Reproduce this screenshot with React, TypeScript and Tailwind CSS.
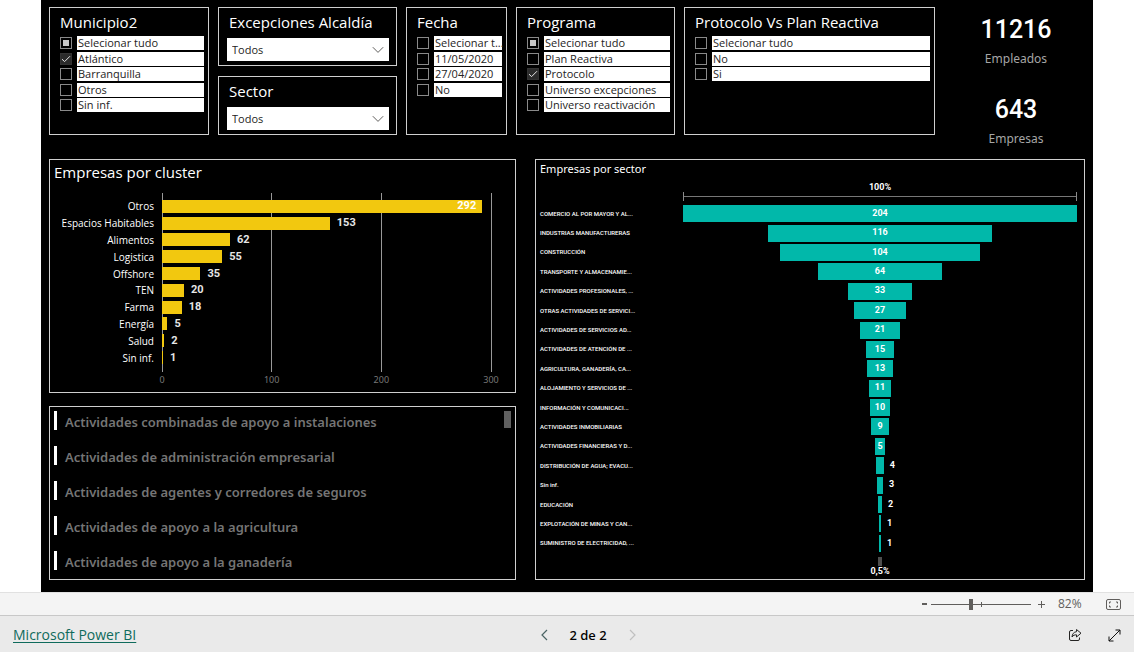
import { useEffect, useRef, type ReactNode } from "react";

type Option = { label: string; state?: "checked" | "partial" };

const municipios: Option[] = [
  { label: "Selecionar tudo", state: "partial" },
  { label: "Atlántico", state: "checked" },
  { label: "Barranquilla" },
  { label: "Otros" },
  { label: "Sin inf." },
];
const fechas: Option[] = [
  { label: "Selecionar t..." },
  { label: "11/05/2020" },
  { label: "27/04/2020" },
  { label: "No" },
];
const programas: Option[] = [
  { label: "Selecionar tudo", state: "partial" },
  { label: "Plan Reactiva" },
  { label: "Protocolo", state: "checked" },
  { label: "Universo excepciones" },
  { label: "Universo reactivación" },
];
const protocolos: Option[] = [{ label: "Selecionar tudo" }, { label: "No" }, { label: "Si" }];

const clusters: [string, number][] = [
  ["Otros", 292],
  ["Espacios Habitables", 153],
  ["Alimentos", 62],
  ["Logistica", 55],
  ["Offshore", 35],
  ["TEN", 20],
  ["Farma", 18],
  ["Energía", 5],
  ["Salud", 2],
  ["Sin inf.", 1],
];

const sectores: [string, number][] = [
  ["COMERCIO AL POR MAYOR Y AL...", 204],
  ["INDUSTRIAS MANUFACTURERAS", 116],
  ["CONSTRUCCIÓN", 104],
  ["TRANSPORTE Y ALMACENAMIE...", 64],
  ["ACTIVIDADES PROFESIONALES, ...", 33],
  ["OTRAS ACTIVIDADES DE SERVICI...", 27],
  ["ACTIVIDADES DE SERVICIOS AD...", 21],
  ["ACTIVIDADES DE ATENCIÓN DE ...", 15],
  ["AGRICULTURA, GANADERÍA, CA...", 13],
  ["ALOJAMIENTO Y SERVICIOS DE ...", 11],
  ["INFORMACIÓN Y COMUNICACI...", 10],
  ["ACTIVIDADES INMOBILIARIAS", 9],
  ["ACTIVIDADES FINANCIERAS Y D...", 5],
  ["DISTRIBUCIÓN DE AGUA; EVACU...", 4],
  ["Sin inf.", 3],
  ["EDUCACIÓN", 2],
  ["EXPLOTACIÓN DE MINAS Y CAN...", 1],
  ["SUMINISTRO DE ELECTRICIDAD, ...", 1],
];

const actividades = [
  "Actividades combinadas de apoyo a instalaciones",
  "Actividades de administración empresarial",
  "Actividades de agentes y corredores de seguros",
  "Actividades de apoyo a la agricultura",
  "Actividades de apoyo a la ganadería",
];

function Panel({ className = "", children }: { className?: string; children: ReactNode }) {
  return <section className={`min-w-0 border border-[#cfcfcf] ${className}`}>{children}</section>;
}

function CheckItem({ option }: { option: Option }) {
  const ref = useRef<HTMLInputElement>(null);
  useEffect(() => {
    if (ref.current) ref.current.indeterminate = option.state === "partial";
  }, [option.state]);
  return (
    <label className="flex min-w-0 items-start gap-[5px]">
      <span className="mt-px grid size-3 shrink-0 place-items-center">
        <input
          ref={ref}
          type="checkbox"
          defaultChecked={option.state === "checked"}
          className="peer col-start-1 row-start-1 size-3 appearance-none border border-[#8a8a8a] bg-black checked:border-[#333333] checked:bg-[#2b2b2b]"
        />
        <span className="pointer-events-none col-start-1 row-start-1 hidden size-[6px] bg-[#c8c8c8] peer-indeterminate:block" />
        <svg
          viewBox="0 0 12 12"
          className="pointer-events-none col-start-1 row-start-1 hidden size-3 peer-checked:block"
          fill="none"
          stroke="#e6e6e6"
          strokeWidth="1"
        >
          <path d="M2 6.2 4.6 8.6 10 3.2" />
        </svg>
      </span>
      <span className="h-[14px] min-w-0 flex-1 bg-white pl-px font-['Open_Sans',sans-serif] text-[11px] leading-[14px] whitespace-nowrap text-[#252423]">
        {option.label}
      </span>
    </label>
  );
}

function CheckSlicer({ title, options }: { title: string; options: Option[] }) {
  return (
    <Panel className="h-32 pt-[5px] pr-[4px] pl-[10px]">
      <fieldset className="min-w-0">
        <legend className="mb-[3px] h-5 font-['Open_Sans',sans-serif] text-[15px] leading-[18px] whitespace-nowrap text-white">
          {title}
        </legend>
        <div className="grid h-[78px] grid-rows-5">
          {options.map((o) => (
            <CheckItem key={o.label} option={o} />
          ))}
        </div>
      </fieldset>
    </Panel>
  );
}

function SelectSlicer({ id, title }: { id: string; title: string }) {
  return (
    <Panel className="h-[59px] pt-[5px] pr-[7px] pl-[8px]">
      <label
        htmlFor={id}
        className="block h-5 pl-[2px] font-['Open_Sans',sans-serif] text-[15px] leading-[18px] whitespace-nowrap text-white"
      >
        {title}
      </label>
      <div className="relative mt-[5px]">
        <select
          id={id}
          className="block h-[23px] w-full appearance-none bg-white pl-[5px] font-['Open_Sans',sans-serif] text-[11px] leading-[23px] text-[#252423]"
        >
          <option>Todos</option>
        </select>
        <svg
          viewBox="0 0 12 8"
          className="pointer-events-none absolute top-2 right-[5px] h-2 w-3"
          fill="none"
          stroke="#605e5c"
          strokeWidth="1"
        >
          <path d="M.8 1.2 6 6.4 11.2 1.2" />
        </svg>
      </div>
    </Panel>
  );
}

function Kpi({ value, label }: { value: string; label: string }) {
  return (
    <div className="flex flex-col items-center">
      <span className="font-[Roboto,sans-serif] text-[25px] leading-8 font-medium text-white">{value}</span>
      <span className="mt-[3px] text-[12px] leading-5 text-[#a6a6a6]">{label}</span>
    </div>
  );
}

function ClusterChart() {
  return (
    <Panel className="h-[234px] pt-[2px] pr-[24px] pl-[4px]">
      <h2 className="h-[22px] font-['Open_Sans',sans-serif] text-[15px] leading-5 text-white">
        Empresas por cluster
      </h2>
      <div className="relative mt-[9px] ml-[108px] h-[179px]">
        {[0, 100, 200, 300].map((t) => (
          <div
            key={t}
            className="absolute top-0 flex w-8 -translate-x-1/2 flex-col items-center"
            style={{ left: `${t / 3}%` }}
          >
            <span className="h-[179px] w-px bg-[#999999]" />
            <span className="mt-[2px] text-[9px] leading-3 text-[#777777]">{t}</span>
          </div>
        ))}
        <div className="relative grid h-[173px] grid-rows-10 pt-[5px]">
          {clusters.map(([name, value]) => (
            <div key={name} className="-ml-[108px] flex items-center">
              <span className="w-[100px] shrink-0 text-right font-['Open_Sans',sans-serif] text-[10px] leading-4 whitespace-nowrap text-white">
                {name}
              </span>
              <div className="ml-2 flex min-w-0 flex-1 items-center">
                <div
                  className="flex h-[13px] items-center justify-end bg-[#f2c80f]"
                  style={{ width: `${value / 3}%` }}
                >
                  {value > 200 && (
                    <span className="pr-[6px] font-[Roboto,sans-serif] text-[11px] font-bold text-white">{value}</span>
                  )}
                </div>
                {value <= 200 && (
                  <span className="pl-[7px] font-[Roboto,sans-serif] text-[11px] leading-4 font-bold text-[#e6e6e6]">
                    {value}
                  </span>
                )}
              </div>
            </div>
          ))}
        </div>
      </div>
    </Panel>
  );
}

function ActivityList() {
  return (
    <Panel className="flex h-[174px] justify-between pt-[4px] pr-[4px] pl-[4px]">
      <ul className="flex flex-col gap-4">
        {actividades.map((a) => (
          <li key={a}>
            <button
              type="button"
              className="flex h-[19px] items-center border-l-[3px] border-white pt-[3px] pl-2 text-[13px] leading-4 font-semibold whitespace-nowrap text-[#757575]"
            >
              {a}
            </button>
          </li>
        ))}
      </ul>
      <span className="h-[17px] w-[7px] bg-[#606060]" />
    </Panel>
  );
}

function FunnelChart() {
  return (
    <Panel className="h-[421px] pr-[7px] pl-[4px]">
      <h2 className="h-[18px] text-[11px] leading-[18px] text-white">Empresas por sector</h2>
      <div className="font-[Roboto,sans-serif] font-bold">
        <div className="ml-[143px] pt-1">
          <p className="h-[10px] text-center text-[9px] leading-[10px] text-white">100%</p>
          <div className="flex h-[9px] items-center border-x border-[#8a8a8a]">
            <span className="h-px flex-1 bg-[#777777]" />
          </div>
        </div>
        <ul className="mt-[3px] grid h-[349px] [grid-template-rows:repeat(18,1fr)]">
          {sectores.map(([name, value]) => (
            <li key={name} className="flex items-center">
              <span className="w-[143px] shrink-0 text-[6px] leading-3 font-medium whitespace-nowrap text-white">
                {name}
              </span>
              <div className="flex min-w-0 flex-1 justify-center">
                <div
                  className="relative flex h-[17px] min-w-[2px] items-center justify-center bg-[#01b8aa] text-[9px] text-white"
                  style={{ width: `${(value / 204) * 100}%` }}
                >
                  {value > 4 ? value : <span className="absolute left-full pl-[6px]">{value}</span>}
                </div>
              </div>
            </li>
          ))}
        </ul>
        <div className="ml-[143px] flex flex-col items-center pt-1">
          <span className="h-[9px] w-1 bg-[#4d4d4d]" />
          <span className="text-[9px] leading-[10px] text-white">0,5%</span>
        </div>
      </div>
    </Panel>
  );
}

function StatusBar() {
  return (
    <div className="flex h-6 items-center justify-end border-y border-t-[#e1e1e1] border-b-[#c8c8c8] bg-[#f4f4f4] pr-[13px] text-[#605e5c]">
      <button type="button" aria-label="-" className="grid h-5 w-[10px] place-items-center">
        <span className="h-[2px] w-[5px] bg-[#605e5c]" />
      </button>
      <div className="relative ml-[2px] flex h-5 w-[100px] items-center">
        <span className="absolute left-1/2 h-[5px] w-px bg-[#605e5c]" />
        <input
          type="range"
          aria-label="Zoom"
          min={0}
          max={200}
          defaultValue={80}
          className="relative h-5 w-full appearance-none bg-transparent [&::-webkit-slider-runnable-track]:h-px [&::-webkit-slider-runnable-track]:bg-[#605e5c] [&::-webkit-slider-thumb]:-mt-[5px] [&::-webkit-slider-thumb]:h-[11px] [&::-webkit-slider-thumb]:w-1 [&::-webkit-slider-thumb]:appearance-none [&::-webkit-slider-thumb]:bg-[#605e5c]"
        />
      </div>
      <button type="button" aria-label="+" className="ml-[5px] grid h-5 w-[10px] place-items-center">
        <svg viewBox="0 0 9 9" className="size-[9px]" stroke="#605e5c" strokeWidth="1">
          <path d="M4.5 1v7M1 4.5h7" />
        </svg>
      </button>
      <span className="ml-3 w-[26px] font-['Open_Sans',sans-serif] text-[12px] leading-5">82%</span>
      <button type="button" aria-label="Ajustar" className="ml-[22px]">
        <svg viewBox="0 0 15 11" className="h-[11px] w-[15px]" fill="none" stroke="#605e5c">
          <rect x=".5" y=".5" width="14" height="10" rx="1.5" />
          <path d="M3.500 4.500V3h1.500M10 3h1.500v1.500M11.500 6.500V8H10M5 8H3.500V6.500" />
        </svg>
      </button>
    </div>
  );
}

function Footer() {
  return (
    <footer className="grid h-9 grid-cols-[539fr_98px_497fr] items-center bg-[#eaeaea] pt-[2px]">
      <a
        href="#"
        className="ml-[13px] w-fit font-['Open_Sans',sans-serif] text-[14px] leading-5 text-[#0f6b5c] underline underline-offset-2"
      >
        Microsoft Power BI
      </a>
      <nav className="flex items-center justify-between px-px">
        <button type="button" aria-label="Página anterior" className="grid h-5 w-2 place-items-center">
          <svg viewBox="0 0 7 12" className="h-3 w-[7px]" fill="none" stroke="#4a6464" strokeWidth="1.200">
            <path d="M6 1 1 6l5 5" />
          </svg>
        </button>
        <span className="text-[13px] leading-5 font-medium text-black">2 de 2</span>
        <button type="button" aria-label="Página siguiente" disabled className="grid h-5 w-2 place-items-center">
          <svg viewBox="0 0 7 12" className="h-3 w-[7px]" fill="none" stroke="#c0c0c0" strokeWidth="1.200">
            <path d="m1 1 5 5-5 5" />
          </svg>
        </button>
      </nav>
      <div className="flex items-center justify-end gap-[26px] pr-[13px]">
        <button type="button" aria-label="Compartir">
          <svg viewBox="0 0 14 14" className="size-[14px]" fill="none" stroke="#252423" strokeLinejoin="round">
            <path d="M5 2.500H3A1.500 1.500 0 0 0 1.500 4v7A1.500 1.500 0 0 0 3 12.500h7a1.500 1.500 0 0 0 1.500-1.500V9.500" />
            <path d="M8.500 1.500 13 5.200 8.500 9V6.800C6.500 6.700 5.200 7.400 4 9c.2-3 1.800-5 4.500-5.300Z" />
          </svg>
        </button>
        <button type="button" aria-label="Pantalla completa">
          <svg viewBox="0 0 13 13" className="size-[13px]" fill="none" stroke="#111111">
            <path d="M1 12 12 1M7.500 1H12v4.500M1 7.500V12h4.500" />
          </svg>
        </button>
      </div>
    </footer>
  );
}

export default function App() {
  return (
    <div className="min-h-screen bg-white font-['Noto_Sans',sans-serif]">
      <main className="mx-[41px] bg-black px-2 pt-[7px] pb-3">
        <div className="grid grid-cols-[160fr_179fr_101fr_159fr_251fr_141fr] items-start gap-[9px]">
          <CheckSlicer title="Municipio2" options={municipios} />
          <div className="flex min-w-0 flex-col gap-[10px]">
            <SelectSlicer id="excepciones" title="Excepciones Alcaldía" />
            <SelectSlicer id="sector" title="Sector" />
          </div>
          <CheckSlicer title="Fecha" options={fechas} />
          <CheckSlicer title="Programa" options={programas} />
          <CheckSlicer title="Protocolo Vs Plan Reactiva" options={protocolos} />
          <div className="flex flex-col gap-[25px] pt-[7px] pl-[3px]">
            <Kpi value="11216" label="Empleados" />
            <Kpi value="643" label="Empresas" />
          </div>
        </div>
        <div className="mt-[10px] grid grid-cols-[467fr_550fr] gap-[19px]">
          <div className="flex min-w-0 flex-col justify-between">
            <ClusterChart />
            <ActivityList />
          </div>
          <FunnelChart />
        </div>
      </main>
      <StatusBar />
      <Footer />
    </div>
  );
}
